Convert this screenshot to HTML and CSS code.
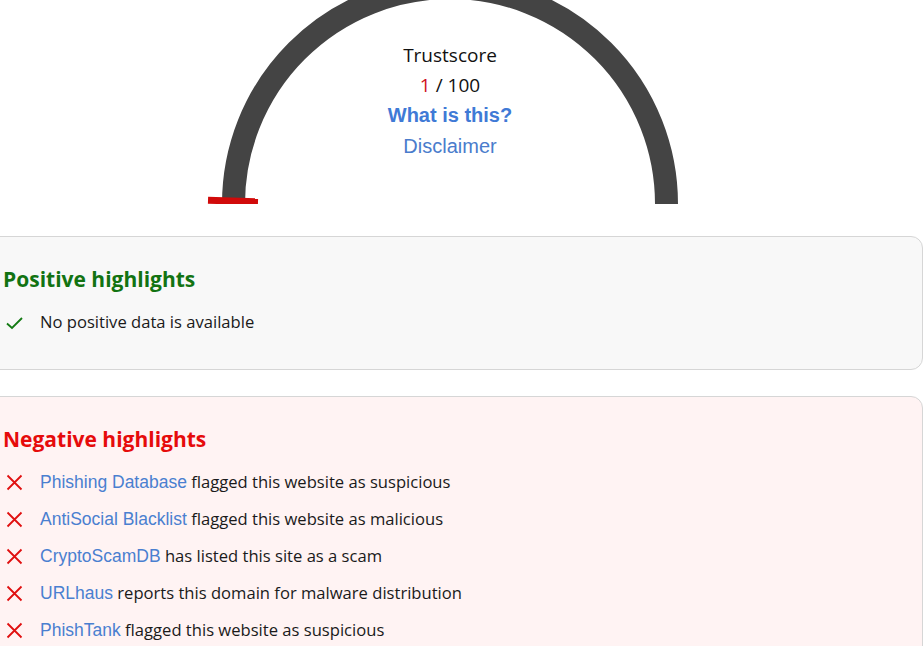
FILE: index.html
```html
<!DOCTYPE html>
<html>
<head>
<meta charset="utf-8">
<link rel="stylesheet" href="styles.css">
</head>
<body>
<div class="gauge">
  <svg class="gauge-arc" width="500" height="204" viewBox="0 0 500 204">
    <path d="M 33.5 204 A 216.5 216.5 0 0 1 466.5 204" fill="none" stroke="#444444" stroke-width="23"/>
    <rect x="8" y="197.5" width="50" height="7" fill="#d10a0a" transform="rotate(1.8 33 201)"/>
  </svg>
  <div class="gauge-text">
    <div class="gt-title">Trustscore</div>
    <div class="gt-score"><span class="score-red">1</span> / 100</div>
    <a class="gt-what" href="#">What is this?</a>
    <a class="gt-disc" href="#">Disclaimer</a>
  </div>
</div>

<div class="cards">
  <section class="card card-pos">
    <h2 class="card-title title-pos">Positive highlights</h2>
    <ul class="items">
      <li class="item">
        <svg class="icon" width="17" height="17" viewBox="0 0 17 17"><path d="M1 9.5 L6 14 L16 4" fill="none" stroke="#137a13" stroke-width="1.8"/></svg>
        <span>No positive data is available</span>
      </li>
    </ul>
  </section>

  <section class="card card-neg">
    <h2 class="card-title title-neg">Negative highlights</h2>
    <ul class="items items-neg">
      <li class="item">
        <svg class="icon" width="17" height="17" viewBox="0 0 17 17"><path d="M1.5 1.5 L15.5 15.5 M15.5 1.5 L1.5 15.5" fill="none" stroke="#e01010" stroke-width="1.8"/></svg>
        <span><a class="src" href="#">Phishing Database</a> flagged this website as suspicious</span>
      </li>
      <li class="item">
        <svg class="icon" width="17" height="17" viewBox="0 0 17 17"><path d="M1.5 1.5 L15.5 15.5 M15.5 1.5 L1.5 15.5" fill="none" stroke="#e01010" stroke-width="1.8"/></svg>
        <span><a class="src" href="#">AntiSocial Blacklist</a> flagged this website as malicious</span>
      </li>
      <li class="item">
        <svg class="icon" width="17" height="17" viewBox="0 0 17 17"><path d="M1.5 1.5 L15.5 15.5 M15.5 1.5 L1.5 15.5" fill="none" stroke="#e01010" stroke-width="1.8"/></svg>
        <span><a class="src" href="#">CryptoScamDB</a> has listed this site as a scam</span>
      </li>
      <li class="item">
        <svg class="icon" width="17" height="17" viewBox="0 0 17 17"><path d="M1.5 1.5 L15.5 15.5 M15.5 1.5 L1.5 15.5" fill="none" stroke="#e01010" stroke-width="1.8"/></svg>
        <span><a class="src" href="#">URLhaus</a> reports this domain for malware distribution</span>
      </li>
      <li class="item">
        <svg class="icon" width="17" height="17" viewBox="0 0 17 17"><path d="M1.5 1.5 L15.5 15.5 M15.5 1.5 L1.5 15.5" fill="none" stroke="#e01010" stroke-width="1.8"/></svg>
        <span><a class="src" href="#">PhishTank</a> flagged this website as suspicious</span>
      </li>
    </ul>
  </section>
</div>
</body>
</html>
```

FILE: styles.css
```css
html, body {
  margin: 0;
  padding: 0;
  background: #ffffff;
  overflow: hidden;
}
body {
  font-family: "Open Sans", "Noto Sans", sans-serif;
  color: #1e1e1e;
  width: 924px;
  height: 646px;
}
.gauge {
  position: relative;
  margin-left: 200px;
  width: 500px;
  height: 204px;
}
.gauge-arc {
  position: absolute;
  left: 0;
  top: 0;
}
.gauge-text {
  position: relative;
  padding-top: 40px;
  display: flex;
  flex-direction: column;
  align-items: center;
}
.gt-title, .gt-score {
  font-size: 19px;
  line-height: 30px;
  color: #111;
}
.score-red { color: #d01020; }
.gt-what, .gt-disc {
  font-family: "Liberation Sans", Arial, sans-serif;
  font-size: 20px;
  line-height: 30.5px;
  color: #3f7ad6;
  text-decoration: none;
}
.gt-what { font-weight: bold; }
.gt-disc { color: #4a7ccc; }

.cards {
  margin-top: 32px;
  margin-left: -12px;
  width: 935px;
  display: flex;
  flex-direction: column;
  gap: 26px;
}
.card {
  border: 1px solid #d6d6d6;
  border-radius: 12px;
  padding: 27px 14px 32px 14px;
}
.card-pos { background: #f8f8f8; }
.card-neg { background: #fff3f3; padding-top: 27px; }
.card-title {
  margin: 0;
  font-size: 21px;
  line-height: 30px;
  font-weight: bold;
}
.title-pos { color: #127312; }
.title-neg { color: #e60b0b; }
.items {
  list-style: none;
  margin: 13px 0 0 0;
  padding: 0;
  display: flex;
  flex-direction: column;
  gap: 7px;
}
.items-neg { margin-top: 13px; }
.item {
  display: flex;
  align-items: center;
  gap: 17px;
  margin-left: 3px;
  height: 30px;
  font-size: 16.6px;
  line-height: 30px;
  color: #1a1a1a;
}
.item span { line-height: 30px; }
.icon { flex: none; }
.src {
  font-family: "Liberation Sans", Arial, sans-serif;
  font-size: 17.5px;
  line-height: 1;
  color: #4a7fd0;
  text-decoration: none;
}
```
